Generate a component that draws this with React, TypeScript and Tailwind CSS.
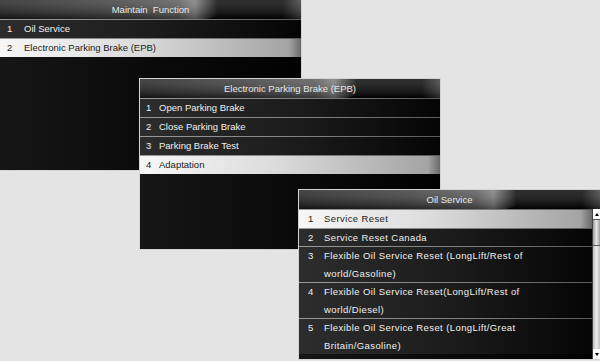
import React from "react";

interface Item {
  n: number;
  lines: string[];
}

const FONT = { fontFamily: '"Liberation Sans", Arial, sans-serif' };

function Header({ title, id }: { title: string; id: string }) {
  return (
    <div className="relative h-[19px] shrink-0 overflow-hidden bg-black">
      {/* glossy swoosh */}
      <svg className="absolute inset-0 h-full w-full" viewBox="0 0 300 18" preserveAspectRatio="none">
        <defs>
          <linearGradient id={`${id}-h`} x1="0" y1="0" x2="1" y2="0">
            <stop offset="0" stopColor="#1c1c1c" />
            <stop offset="0.45" stopColor="#3a3a3a" />
            <stop offset="0.7" stopColor="#555555" />
            <stop offset="0.77" stopColor="#7a7a7a" />
            <stop offset="0.86" stopColor="#000000" />
          </linearGradient>
          <linearGradient id={`${id}-v`} x1="0" y1="0" x2="0" y2="1">
            <stop offset="0" stopColor="#ffffff" stopOpacity="0.18" />
            <stop offset="1" stopColor="#000000" stopOpacity="0.35" />
          </linearGradient>
          <linearGradient id={`${id}-r`} x1="0" y1="0" x2="1" y2="0">
            <stop offset="0" stopColor="#000000" />
            <stop offset="1" stopColor="#3a3a3a" />
          </linearGradient>
        </defs>
        <path d="M0 0 H252 C240 5 228 13 206 18 H0 Z" fill={`url(#${id}-h)`} />
        <rect x="282" y="0" width="18" height="18" fill={`url(#${id}-r)`} />
        <rect x="0" y="0" width="300" height="18" fill={`url(#${id}-v)`} />
      </svg>
      <div className="relative flex h-full items-center justify-center whitespace-pre text-[9.5px] leading-none text-[#e8e8e8]">
        {title}
      </div>
    </div>
  );
}

function Row({
  item,
  hi,
  numLeft,
  textLeft,
  wide,
}: {
  item: Item;
  hi: boolean;
  numLeft: number;
  textLeft: number;
  wide?: boolean;
}) {
  const lh = wide ? "leading-[17.5px]" : "leading-[18px]";
  return (
    <div className="shrink-0">
      <div className="h-px bg-[linear-gradient(to_right,#9a9a9a,#7c7c7c_60%,#5a5a5a)]" />
      <div
        className={`flex ${
          hi
            ? "bg-[linear-gradient(to_right,#f7f7f7,#dcdcdc_45%,#a4a4a4_96%,#6a6a6a)] text-[#1a1a1a]"
            : "bg-[linear-gradient(to_right,#2d2d2d,#1c1c1c_50%,#050505)] text-[#f0f0f0]"
        } ${wide ? "tracking-[0.4px]" : ""} text-[9.5px]`}
      >
        <div style={{ width: textLeft, paddingLeft: numLeft }} className={`shrink-0 ${lh}`}>
          {item.n}
        </div>
        <div className={lh}>
          {item.lines.map((l) => (
            <div key={l}>{l}</div>
          ))}
        </div>
      </div>
    </div>
  );
}

function Window({
  id,
  title,
  items,
  selected,
  numLeft,
  textLeft,
  wide,
  scroll,
  className,
}: {
  id: string;
  title: string;
  items: Item[];
  selected: number;
  numLeft: number;
  textLeft: number;
  wide?: boolean;
  scroll?: boolean;
  className: string;
}) {
  return (
    <div className={`absolute flex flex-col overflow-hidden border border-[#d4d4d4] bg-black ${className}`}>
      <Header title={title} id={id} />
      <div className="flex min-h-0 flex-1">
        <div className="flex flex-1 flex-col bg-[linear-gradient(to_right,#161616,#0a0a0a_50%,#020202)]">
          {items.map((it) => (
            <Row
              key={it.n}
              item={it}
              hi={it.n === selected}
              numLeft={numLeft}
              textLeft={textLeft}
              wide={wide}
            />
          ))}
        </div>
        {scroll && (
          <div className="flex w-[8px] shrink-0 flex-col border-l border-[#444] bg-[#cfcfcf]">
            <div className="flex h-[10px] items-center justify-center bg-white">
              <div className="h-0 w-0 border-x-[2.5px] border-b-[3px] border-x-transparent border-b-black" />
            </div>
            <div className="h-[27px] border-y border-[#5a5a5a] bg-[linear-gradient(to_right,#9a9a9a,#e6e6e6,#9a9a9a)]" />
            <div className="flex-1 bg-[linear-gradient(to_right,#bdbdbd,#ececec,#bdbdbd)]" />
            <div className="flex h-[10px] items-center justify-center bg-white">
              <div className="h-0 w-0 border-x-[2.5px] border-t-[3px] border-x-transparent border-t-black" />
            </div>
          </div>
        )}
      </div>
    </div>
  );
}

export default function App() {
  const maintain: Item[] = [
    { n: 1, lines: ["Oil Service"] },
    { n: 2, lines: ["Electronic Parking Brake (EPB)"] },
  ];
  const epb: Item[] = [
    { n: 1, lines: ["Open Parking Brake"] },
    { n: 2, lines: ["Close Parking Brake"] },
    { n: 3, lines: ["Parking Brake Test"] },
    { n: 4, lines: ["Adaptation"] },
  ];
  const oil: Item[] = [
    { n: 1, lines: ["Service Reset"] },
    { n: 2, lines: ["Service Reset Canada"] },
    { n: 3, lines: ["Flexible Oil Service Reset (LongLift/Rest of", "world/Gasoline)"] },
    { n: 4, lines: ["Flexible Oil Service Reset(LongLift/Rest of", "world/Diesel)"] },
    { n: 5, lines: ["Flexible Oil Service Reset (LongLift/Great", "Britain/Gasoline)"] },
  ];

  return (
    <div className="relative h-[361px] w-[600px] overflow-hidden bg-[#e4e4e4]" style={FONT}>
      <Window
        id="w1"
        title="Maintain  Function"
        items={maintain}
        selected={2}
        numLeft={7}
        textLeft={24}
        className="left-[-1px] top-[-1px] h-[172px] w-[303px]"
      />
      <Window
        id="w2"
        title="Electronic Parking Brake (EPB)"
        items={epb}
        selected={4}
        numLeft={6}
        textLeft={19}
        className="left-[139px] top-[78px] h-[172px] w-[302px]"
      />
      <Window
        id="w3"
        title="Oil Service"
        items={oil}
        selected={1}
        numLeft={9}
        textLeft={25}
        wide
        scroll
        className="left-[298px] top-[189px] h-[171px] w-[303px]"
      />
    </div>
  );
}
